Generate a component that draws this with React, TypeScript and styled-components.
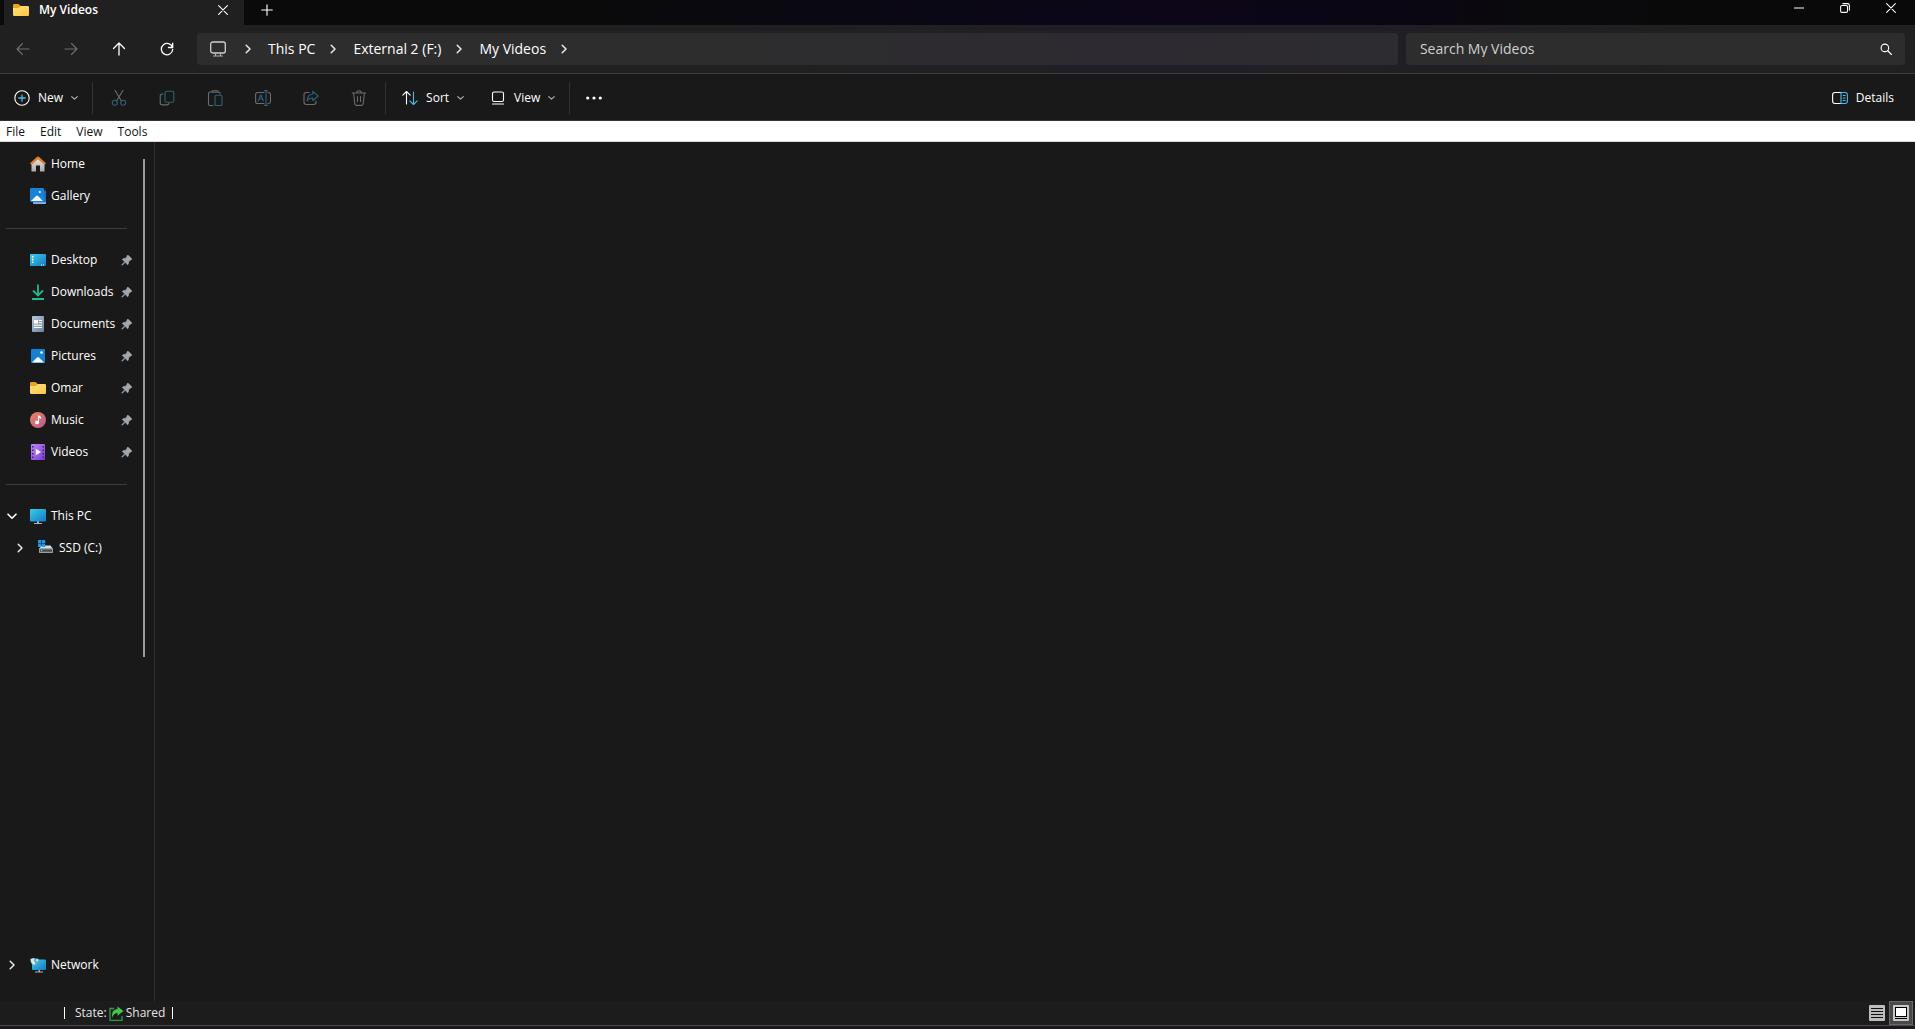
import React from "react";
import styled, { createGlobalStyle } from "styled-components";

const GlobalStyle = createGlobalStyle`
  *, *::before, *::after { box-sizing: border-box; }
  html, body, #root { height: 100%; }
  body { margin: 0; background: #191919; overflow: hidden; }
  button, input { font: inherit; color: inherit; }
  ul { list-style: none; margin: 0; padding: 0; }
  svg { display: block; flex: none; }
`;

const Window = styled.div`
  display: flex;
  flex-direction: column;
  height: 100vh;
  background: #191919;
  color: #fff;
  font-family: "Segoe UI", "Open Sans", "Noto Sans", sans-serif;
  font-size: 12px;
  line-height: 16px;
`;

const PlainButton = styled.button`
  display: flex;
  align-items: center;
  border: 0;
  padding: 0;
  background: transparent;
  white-space: nowrap;
`;

const TitleBar = styled.header`
  display: flex;
  flex: none;
  height: 25px;
  background: linear-gradient(90deg, #0a0a0a 30%, #0a0813 45%, #0c0618 60%, #0b0614 72%, #0a090c 80%, #090909 92%);
`;

const Tab = styled.div`
  display: flex;
  align-items: center;
  width: 240px;
  margin-left: 4px;
  padding: 0 16px 6px 9px;
  background: #202020;
  font-weight: 600;
`;

const TabTitle = styled.span`
  flex: 1;
  margin-left: 10px;
`;

const NewTab = styled(PlainButton)`
  justify-content: center;
  width: 46px;
  padding-bottom: 6px;
`;

const Caption = styled.div`
  display: flex;
  margin-left: auto;
`;

const CaptionButton = styled(PlainButton)`
  justify-content: center;
  width: 46px;
  padding: 0 2px 10px 0;
`;

const AddressRow = styled.div`
  display: flex;
  align-items: center;
  flex: none;
  height: 49px;
  padding-right: 10px;
  border-bottom: 1px solid #3d3d3d;
  background: linear-gradient(90deg, #202020 40%, #211f25 55%, #211e26 70%, #202020 88%);
`;

const NavButtons = styled.nav`
  display: flex;
  width: 197px;
`;

const NavButton = styled(PlainButton)`
  justify-content: center;
  width: 48px;
  height: 32px;
  padding-right: 2px;
  color: #fff;
  &:disabled { color: #6f6f6f; }
`;

const Breadcrumb = styled.nav`
  display: flex;
  align-items: center;
  flex: 1;
  height: 32px;
  padding-left: 13px;
  border-radius: 4px;
  background: linear-gradient(90deg, #2d2d2d 40%, #2d2a31 75%, #2d2c30);
  font-size: 14px;
`;

const AddressIcon = styled.span`
  margin-right: 4px;
`;

const Crumb = styled.a`
  margin-left: 2px;
  color: #fff;
  text-decoration: none;
  white-space: nowrap;
`;

const CrumbArrow = styled.span`
  display: flex;
  justify-content: center;
  width: 36px;
`;

const Search = styled.label`
  display: flex;
  align-items: center;
  flex: 0 0 26.2%;
  height: 32px;
  margin-left: 8px;
  padding: 0 13px 0 14px;
  border-radius: 4px;
  background: #2d2d2e;
  font-size: 14px;
`;

const SearchInput = styled.input`
  flex: 1;
  min-width: 0;
  padding: 0;
  border: 0;
  outline: 0;
  background: transparent;
  &::placeholder { color: #cfcfcf; opacity: 1; }
`;

const CommandBar = styled.div`
  display: flex;
  align-items: center;
  flex: none;
  height: 47px;
  padding: 2px 10px 0 0;
  border-bottom: 1px solid #333;
`;

const Command = styled(PlainButton)`
  height: 32px;
  padding: 0 11px 0 14px;
  gap: 8px;
  font-weight: 500;
`;

const IconCommand = styled(PlainButton)`
  justify-content: center;
  width: 48px;
  height: 32px;
`;

const Divider = styled.span`
  width: 1px;
  height: 32px;
  margin: 0 2px;
  background: #333;
`;

const Spacer = styled.span`
  flex: 1;
`;

const MenuBar = styled.nav`
  display: flex;
  align-items: center;
  flex: none;
  height: 21px;
  padding: 2px 0 0 6px;
  gap: 15px;
  border-bottom: 1px solid #d8d8d8;
  background: #fff;
  color: #111;
`;

const Body = styled.div`
  display: flex;
  flex: 1;
  min-height: 0;
`;

const Sidebar = styled.aside`
  display: flex;
  width: 155px;
  border-right: 1px solid #303030;
`;

const Tree = styled.nav`
  display: flex;
  flex-direction: column;
  width: 143px;
  padding: 6px 0 20px;
`;

const Item = styled.li<{ $depth?: number }>`
  display: flex;
  align-items: center;
  height: 32px;
  padding-left: ${(p) => 4 + (p.$depth || 0) * 8}px;
  padding-right: 10px;
`;

const Twisty = styled(PlainButton)`
  justify-content: center;
  width: 16px;
  height: 16px;
`;

const TwistySpace = styled.span`
  width: 16px;
`;

const ItemLink = styled.a`
  display: flex;
  align-items: center;
  flex: 1;
  gap: 5px;
  color: #fff;
  text-decoration: none;
  white-space: nowrap;
`;

const IconSlot = styled.span`
  display: flex;
  width: 16px;
  margin-left: 10px;
`;

const Rule = styled.li`
  height: 32px;
  padding-top: 16px;
  margin: 0 16px 0 6px;
  &::before { content: ""; display: block; height: 1px; background: #3c3c3c; }
`;

const NetworkGroup = styled.ul`
  margin-top: auto;
`;

const Track = styled.div`
  padding-top: 17px;
`;

const Thumb = styled.div`
  width: 2px;
  height: 59.2%;
  background: #9b9b9b;
`;

const Content = styled.main`
  flex: 1;
`;

const StatusBar = styled.footer`
  display: flex;
  align-items: center;
  flex: none;
  height: 24px;
  padding: 0 2px 0 64px;
  background: #1c1c1c;
  color: #e4e4e4;
`;

const Mark = styled.span`
  width: 1px;
  height: 12px;
  background: #fff;
`;

const State = styled.span`
  display: flex;
  align-items: center;
  gap: 2px;
  margin: 0 7px 0 10px;
`;

const ViewButton = styled(PlainButton)<{ $on?: boolean }>`
  justify-content: center;
  width: 24px;
  height: 24px;
  border: 1px solid ${(p) => (p.$on ? "#686868" : "transparent")};
  background: ${(p) => (p.$on ? "#4a4a4a" : "transparent")};
`;

const BottomEdge = styled.div`
  flex: none;
  height: 4px;
  border-top: 1px solid #4a4a4a;
  background: #1c191d;
`;

type Kids = { children: React.ReactNode; size?: number };
const Line = ({ children, size = 16 }: Kids) => (
  <svg width={size} height={size} viewBox="0 0 16 16" fill="none" stroke="currentColor" strokeWidth="1.1" strokeLinecap="round" strokeLinejoin="round" aria-hidden="true">
    {children}
  </svg>
);
const Art = ({ children }: Kids) => (
  <svg width="16" height="16" viewBox="0 0 16 16" aria-hidden="true">{children}</svg>
);

const ChevronRight = () => (
  <svg width="10" height="10" viewBox="0 0 10 10" fill="none" stroke="#e8e8e8" strokeWidth="1.5" strokeLinecap="round" strokeLinejoin="round" aria-hidden="true"><path d="M3.2 1.2 7 5 3.2 8.8" /></svg>
);
const ChevronDown = () => (
  <svg width="10" height="10" viewBox="0 0 10 10" fill="none" stroke="#fff" strokeWidth="1.6" strokeLinecap="round" strokeLinejoin="round" aria-hidden="true"><path d="M1 3.2 5 7.2 9 3.2" /></svg>
);
const SmallDown = () => (
  <svg width="8" height="8" viewBox="0 0 8 8" fill="none" stroke="#b5b5b5" strokeWidth="1.1" strokeLinecap="round" strokeLinejoin="round" aria-hidden="true"><path d="M.7 2.600 3.500 5.200 6.300 2.600" /></svg>
);

const FolderIcon = () => (
  <Art>
    <defs><linearGradient id="folder" x1="0" y1="0" x2="1" y2="1"><stop stopColor="#ffe187" /><stop offset="1" stopColor="#ffc63d" /></linearGradient></defs>
    <path d="M0 3.2Q0 2 1.2 2h4q.6 0 1 .4L7.6 4H14v5H0z" fill="#e9a90e" />
    <path d="M0 5.9h5.4q.5 0 .9-.4l1.200-1.200q.3-.3.8-.3h6.500q1.200 0 1.200 1.200v7.600q0 1.200-1.200 1.200H1.200Q0 14 0 12.800z" fill="url(#folder)" />
  </Art>
);
const HomeIcon = () => (
  <Art>
    <defs><linearGradient id="home" x1="0" y1="0" x2="0" y2="1"><stop stopColor="#e6e6e6" /><stop offset="1" stopColor="#a8a8a8" /></linearGradient></defs>
    <path d="M1.500 7.500 8 2l6.500 5.500V15q0 .6-.6.6H10V9.500H6v6.100H2.100Q1.500 15.600 1.500 15z" fill="url(#home)" />
    <path d="M8 .4q.5 0 .9.400L16 7.300 14.600 9 8 3.200 1.400 9 0 7.300 7.100.8Q7.500.4 8 .4z" fill="#e27f2c" />
  </Art>
);
const PhotoIcon = () => (
  <Art>
    <rect x="1" y="1" width="14" height="14" rx="1" fill="#1580d0" />
    <path d="M2 14.500 7 9.500q1-.9 2 0l5 5z" fill="#f4f9ff" />
    <circle cx="11.500" cy="4.500" r="1.300" fill="#fff" />
  </Art>
);
const GalleryIcon = () => (
  <Art>
    <path d="M3 13h11V2.500h1q1 0 1 1V15q0 1-1 1H4q-1 0-1-1z" fill="#1c70bb" />
    <path d="M3 14.200h13v.8q0 1-1 1H4q-1 0-1-1z" fill="#8cb6e6" />
    <rect width="14" height="14" rx="1.300" fill="#1683d8" />
    <path d="M1 13 6 8q1-.9 2 0l5 5z" fill="#f4f9ff" />
    <circle cx="9.800" cy="4" r="1.100" fill="#fff" />
  </Art>
);
const DesktopIcon = () => (
  <Art>
    <defs><linearGradient id="desk" x1="0" y1="0" x2="1" y2="1"><stop stopColor="#3ad0e0" /><stop offset="1" stopColor="#1478cc" /></linearGradient></defs>
    <rect y="2" width="16" height="12" rx="1" fill="url(#desk)" />
    <path d="M2 4h1.500v1.500H2zM2 6.700h1.500v1.500H2zM2 9.400h1.500v1.500H2zM11 12.500h1v1h-1zM13 12.500h1v1h-1z" fill="#fff" />
  </Art>
);
const DownloadIcon = () => (
  <Art><path d="M8 .5v10.500M3 6.500 8 11.500 13 6.500M2 15h12" fill="none" stroke="#27b78d" strokeWidth="1.800" /></Art>
);
const DocumentIcon = () => (
  <Art>
    <defs><linearGradient id="doc" x1="0" y1="0" x2="1" y2="1"><stop stopColor="#b9cbdc" /><stop offset="1" stopColor="#6b8199" /></linearGradient></defs>
    <rect x="2" width="12" height="16" rx="1" fill="url(#doc)" />
    <path d="M4 4h4v3.500H4zM9 4h3v1H9zM9 6.300h3v1H9zM4 8.800h8v1H4zM4 11h8v1H4z" fill="#fff" />
  </Art>
);
const MusicIcon = () => (
  <Art>
    <defs><linearGradient id="music" x1="0" y1="0" x2="1" y2="1"><stop stopColor="#ee8460" /><stop offset="1" stopColor="#b55a91" /></linearGradient></defs>
    <circle cx="8" cy="8" r="8" fill="url(#music)" />
    <path d="M8 3.500h1L11 5v1.700L9.100 5.700V10.500A2 1.800 0 1 1 8 8.900z" fill="#fff" />
  </Art>
);
const VideoIcon = () => (
  <Art>
    <defs><linearGradient id="video" x1="0" y1="0" x2="1" y2="1"><stop stopColor="#b98af2" /><stop offset="1" stopColor="#7c3ad4" /></linearGradient></defs>
    <rect x="1" width="14" height="16" rx="1" fill="url(#video)" />
    <path d="M2 2h1.500v1.500H2zM2 5.500h1.500V7H2zM2 9h1.500v1.500H2zM2 12.500h1.500V14H2zM12.500 2H14v1.500h-1.500zM12.500 5.500H14V7h-1.500zM12.500 9H14v1.500h-1.500zM12.500 12.500H14V14h-1.500z" fill="#45207f" />
    <path d="M5.800 4.700 11 8l-5.200 3.300z" fill="#fff" />
  </Art>
);
const PcIcon = () => (
  <Art>
    <path d="M7 13h2v2H7zM4 15h8v1H4z" fill="#a9b4bd" />
    <rect y="1" width="16" height="12.500" rx="1" fill="url(#desk)" />
  </Art>
);
const NetworkIcon = () => (
  <Art>
    <path d="M8.500 12h1.500v3H8.500zM5 14.500h8v1H5z" fill="#a9b4bd" />
    <rect x="2" y="2.500" width="14" height="10.500" rx="1" fill="url(#desk)" />
    <path d="M.3 1.800Q4.500.6 8.700 1.800 9.300 7.500 4.500 9 0 7.500.3 1.800z" fill="#5aa9cc" />
    <path d="M.8 2.200q2-1 3.700-.8L3.800 3.800 5.500 6 4.200 8Q1 6.500.8 2.200zM6.500 2l1.800.4-.6 2.400-1.700-1z" fill="#dcebf2" />
  </Art>
);
const DriveIcon = () => (
  <Art>
    <path d="M3.500 5.500h9L15 9H1z" fill="#d9dee2" />
    <rect x="1" y="8" width="14" height="5" rx=".8" fill="#9a9fa3" />
    <rect x="2" y="9.500" width="12" height="2.200" fill="#44484b" />
    <path d="M3 10h1.200v1H3z" fill="#8ff07e" />
    <path d="M0 0h3.300v3.200H0zM3.900 0h3.300v3.200H3.900zM0 3.800h3.300V7H0zM3.900 3.800h3.300V7H3.900z" fill="#1d9be6" />
  </Art>
);
const PinIcon = () => (
  <svg width="12" height="12" viewBox="0 0 12 12" aria-hidden="true">
    <path d="M6.900 1 11 5.100 10 6.100 9.400 5.900 7.600 7.900 7.400 9.900 6.500 10.800 4.200 8.300 1.200 11.300.7 10.800 3.700 7.800 1.300 5.500 2.200 4.600 4.200 4.400 6.100 2.600 5.900 2z" fill="#a0a8ae" stroke="#a0a8ae" strokeWidth=".6" strokeLinejoin="round" />
  </svg>
);

const BLUE = "#4cb8e8";
const DIM = "#6c6c6c";
const DIM_BLUE = "#2e6078";

const CutIcon = () => (
  <Line><path d="M4 .3 10.400 11M12 .3 5.600 11" stroke={DIM} /><circle cx="3.800" cy="12.800" r="2.500" stroke={DIM_BLUE} /><circle cx="12.200" cy="12.800" r="2.500" stroke={DIM_BLUE} /></Line>
);
const CopyIcon = () => (
  <Line><path d="M4 4H3.500Q1.200 4 1.200 6.200v6.500q0 2.200 2.200 2.200h4.300q2 0 2.200-1.500" stroke={DIM} /><rect x="6" y="1.200" width="8.800" height="11" rx="1.800" stroke={DIM_BLUE} /></Line>
);
const PasteIcon = () => (
  <Line><path d="M5 2H3.200Q1.500 2 1.500 3.500v10.500q0 1.500 1.500 1.500H6M11 2h.8Q13 2 13 3.500V4M5 1.500Q5 .7 5.800.7h4.400q.8 0 .8.800t-.8.800H5.800Q5 2.300 5 1.500z" stroke={DIM} /><rect x="8" y="5.200" width="7" height="10.300" rx="1.200" stroke={DIM_BLUE} /></Line>
);
const RenameIcon = () => (
  <Line><path d="M9 2.500H2.700Q.6 2.500.6 4.600v6.800q0 2.100 2.100 2.100H9M13 2.500h.5q2 0 2 2.100v6.800q0 2.100-2 2.100H13" stroke={DIM} /><path d="M3.200 11 5.800 4.800 8.400 11M4 9h3.600M11 .6v14.800M9.500.6h3M9.500 15.400h3" stroke={DIM_BLUE} /></Line>
);
const ShareIcon = () => (
  <Line><path d="M6 2.500H3.200Q1 2.500 1 4.700v7.600q0 2.200 2.200 2.200h7.600q2.200 0 2.200-2.200V11" stroke={DIM} /><path d="M9.800 1.300 15.200 6 9.800 10.500V8Q6 7.800 4.200 10.800 4.500 4.500 9.800 4z" stroke={DIM_BLUE} /></Line>
);
const DeleteIcon = () => (
  <Line><path d="M1.200 3h13.600M5.800 3Q5.800.8 8 .8T10.200 3M2.600 3l1.200 10.700q.2 1.700 1.900 1.700h4.600q1.700 0 1.900-1.700L13.400 3M6.500 6.500v5M9.500 6.500v5" stroke={DIM} /></Line>
);

type Entry = { label: string; icon: React.ReactNode; pinned?: boolean; open?: boolean; depth?: number };
const top: Entry[] = [
  { label: "Home", icon: <HomeIcon /> },
  { label: "Gallery", icon: <GalleryIcon /> },
];
const pinned: Entry[] = [
  { label: "Desktop", icon: <DesktopIcon />, pinned: true },
  { label: "Downloads", icon: <DownloadIcon />, pinned: true },
  { label: "Documents", icon: <DocumentIcon />, pinned: true },
  { label: "Pictures", icon: <PhotoIcon />, pinned: true },
  { label: "Omar", icon: <FolderIcon />, pinned: true },
  { label: "Music", icon: <MusicIcon />, pinned: true },
  { label: "Videos", icon: <VideoIcon />, pinned: true },
];
const places: Entry[] = [
  { label: "This PC", icon: <PcIcon />, open: true },
  { label: "SSD (C:)", icon: <DriveIcon />, open: false, depth: 1 },
];
const network: Entry[] = [{ label: "Network", icon: <NetworkIcon />, open: false }];
const crumbs = ["This PC", "External 2 (F:)", "My Videos"];
const menus = ["File", "Edit", "View", "Tools"];

const renderItem = (e: Entry) => (
  <Item key={e.label} $depth={e.depth}>
    {e.open === undefined ? <TwistySpace /> : (
      <Twisty aria-label={(e.open ? "Collapse " : "Expand ") + e.label} aria-expanded={e.open}>
        {e.open ? <ChevronDown /> : <ChevronRight />}
      </Twisty>
    )}
    <ItemLink href="#">
      <IconSlot>{e.icon}</IconSlot>
      {e.label}
    </ItemLink>
    {e.pinned && <PinIcon />}
  </Item>
);

export default function App() {
  return (
    <Window>
      <GlobalStyle />
      <TitleBar>
        <Tab>
          <FolderIcon />
          <TabTitle>My Videos</TabTitle>
          <PlainButton aria-label="Close tab"><Line size={10}><path d="M1 1l14 14M15 1 1 15" strokeWidth="1.800" /></Line></PlainButton>
        </Tab>
        <NewTab aria-label="New tab"><Line size={12}><path d="M8 1v14M1 8h14" strokeWidth="1.500" /></Line></NewTab>
        <Caption>
          <CaptionButton aria-label="Minimize"><Line size={10}><path d="M0 8h16" strokeWidth="1.600" /></Line></CaptionButton>
          <CaptionButton aria-label="Restore"><Line size={10}><rect x="1" y="4" width="11" height="11" rx="2" strokeWidth="1.700" /><path d="M4.500 1H12q3 0 3 3v7.500" strokeWidth="1.700" /></Line></CaptionButton>
          <CaptionButton aria-label="Close"><Line size={10}><path d="M1 1l14 14M15 1 1 15" strokeWidth="1.700" /></Line></CaptionButton>
        </Caption>
      </TitleBar>

      <AddressRow>
        <NavButtons aria-label="History">
          <NavButton disabled aria-label="Back"><Line><path d="M14 8H2M7.500 2.500 2 8l5.500 5.500" /></Line></NavButton>
          <NavButton disabled aria-label="Forward"><Line><path d="M2 8h12M8.500 2.500 14 8l-5.500 5.500" /></Line></NavButton>
          <NavButton aria-label="Up"><Line><path d="M8 14V2M2.500 7.500 8 2l5.500 5.500" strokeWidth="1.300" /></Line></NavButton>
          <NavButton aria-label="Refresh"><Line><path d="M13.500 6.500A5.700 5.700 0 1 0 13.700 8.500M13.700 2.200v4.300H9.500" strokeWidth="1.300" /></Line></NavButton>
        </NavButtons>
        <Breadcrumb aria-label="Address">
          <AddressIcon>
            <Line><rect x=".7" y="1" width="14.600" height="11" rx="2" stroke="#d0d0d0" strokeWidth="1.300" /><path d="M5.500 12v2.500M10.500 12v2.500M3.500 15h9" stroke="#b0b0b0" /></Line>
          </AddressIcon>
          <CrumbArrow><ChevronRight /></CrumbArrow>
          {crumbs.map((name) => (
            <React.Fragment key={name}>
              <Crumb href="#">{name}</Crumb>
              <CrumbArrow><ChevronRight /></CrumbArrow>
            </React.Fragment>
          ))}
        </Breadcrumb>
        <Search>
          <SearchInput type="text" aria-label="Search My Videos" placeholder="Search My Videos" />
          <Line size={12}><circle cx="6.500" cy="6.500" r="5" strokeWidth="1.500" /><path d="m10.300 10.300 5 5" strokeWidth="1.600" /></Line>
        </Search>
      </AddressRow>

      <CommandBar>
        <Command>
          <Line><circle cx="8" cy="8" r="7.200" /><path d="M8 4.800v6.400M4.800 8h6.400" stroke={BLUE} strokeWidth="1.300" /></Line>
          New
          <SmallDown />
        </Command>
        <Divider />
        <IconCommand disabled aria-label="Cut"><CutIcon /></IconCommand>
        <IconCommand disabled aria-label="Copy"><CopyIcon /></IconCommand>
        <IconCommand disabled aria-label="Paste"><PasteIcon /></IconCommand>
        <IconCommand disabled aria-label="Rename"><RenameIcon /></IconCommand>
        <IconCommand disabled aria-label="Share"><ShareIcon /></IconCommand>
        <IconCommand disabled aria-label="Delete"><DeleteIcon /></IconCommand>
        <Divider />
        <Command>
          <Line><path d="M4.500 14V1.500M.8 5.200 4.500 1.500l3.700 3.700" /><path d="M11.500 2v12.500M7.800 10.800l3.700 3.700 3.700-3.700" stroke={BLUE} /></Line>
          Sort
          <SmallDown />
        </Command>
        <Command>
          <Line><rect x="2.500" y="2" width="11" height="9.500" rx="1.500" /><path d="M2.500 14h11" /></Line>
          View
          <SmallDown />
        </Command>
        <Divider />
        <Command aria-label="See more"><svg width="16" height="16" viewBox="0 0 16 16" fill="#fff" aria-hidden="true"><circle cx="1.700" cy="8" r="1.600" /><circle cx="8" cy="8" r="1.600" /><circle cx="14.300" cy="8" r="1.600" /></svg></Command>
        <Spacer />
        <Command>
          <Line><path d="M9 2.500H3Q.6 2.500.6 4.900v6.200q0 2.400 2.400 2.400h6" /><path d="M9 2.500h4q2.400 0 2.400 2.400v6.200q0 2.400-2.400 2.400H9zM11.200 5.500h2M11.200 8h2M11.200 10.500h2" stroke={BLUE} /></Line>
          Details
        </Command>
      </CommandBar>

      <MenuBar aria-label="Menu">
        {menus.map((name) => <PlainButton key={name}>{name}</PlainButton>)}
      </MenuBar>

      <Body>
        <Sidebar>
          <Tree aria-label="Folders">
            <ul>
              {top.map(renderItem)}
              <Rule />
              {pinned.map(renderItem)}
              <Rule />
              {places.map(renderItem)}
            </ul>
            <NetworkGroup>{network.map(renderItem)}</NetworkGroup>
          </Tree>
          <Track><Thumb /></Track>
        </Sidebar>
        <Content />
      </Body>

      <StatusBar>
        <Mark />
        <State>
          State:
          <svg width="15" height="15" viewBox="0 0 15 15" aria-hidden="true">
            <path d="M5 2.500H1v12h12V10" fill="none" stroke="#2f9e3a" strokeWidth="1.300" />
            <path d="M8.500.5 14.500 5 8.500 9.800V7Q4.500 7 3 12 2 3.500 8.500 3z" fill="#45c44c" />
          </svg>
          Shared
        </State>
        <Mark />
        <Spacer />
        <ViewButton aria-label="Details view">
          <svg width="16" height="16" viewBox="0 0 16 16" aria-hidden="true"><rect width="16" height="16" rx="1" fill="#bdbdbd" /><path d="M2 3.500h12M2 6.500h12M2 9.500h12M2 12.500h12" stroke="#111" /></svg>
        </ViewButton>
        <ViewButton $on aria-label="Large thumbnails" aria-pressed="true">
          <svg width="16" height="16" viewBox="0 0 16 16" aria-hidden="true"><rect width="16" height="16" rx="1" fill="#c8c8c8" /><rect x="2.500" y="2.500" width="11" height="9" fill="#fff" stroke="#000" /><path d="M2 13.500h12" stroke="#000" /></svg>
        </ViewButton>
      </StatusBar>
      <BottomEdge />
    </Window>
  );
}
